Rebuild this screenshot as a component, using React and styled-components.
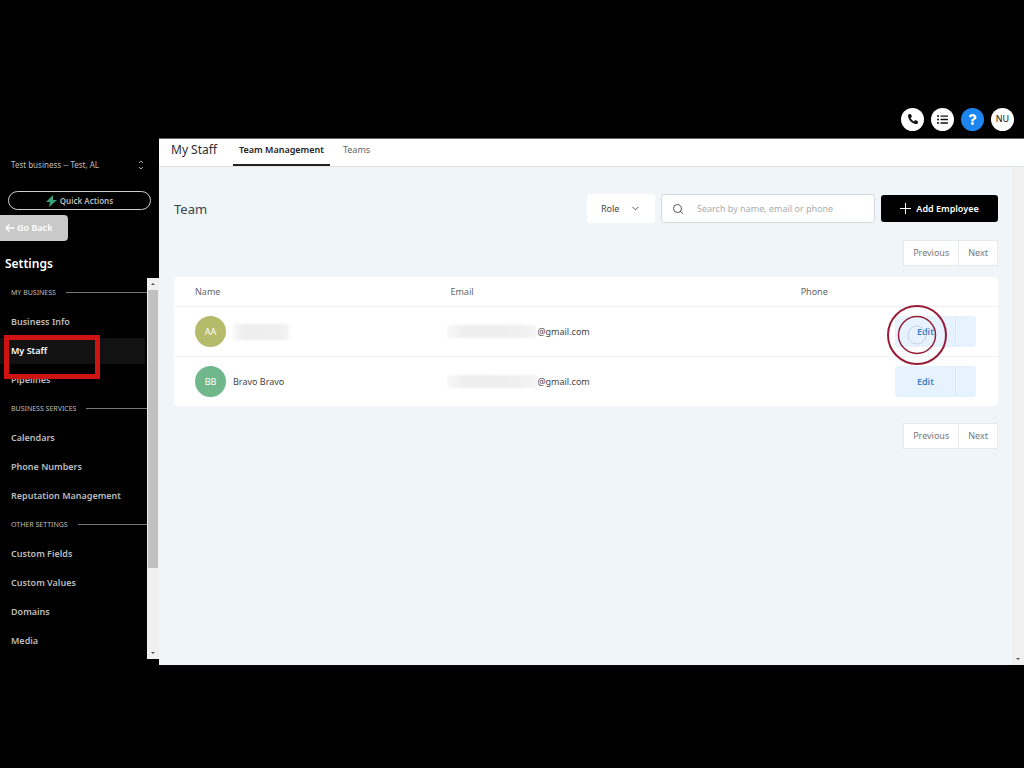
import React from "react";
import styled, { createGlobalStyle, css } from "styled-components";
import { FiSearch, FiChevronDown } from "react-icons/fi";
import { FaPhoneAlt, FaListUl, FaQuestion } from "react-icons/fa";

const GlobalStyle = createGlobalStyle`
  * {
    box-sizing: border-box;
  }
  body {
    margin: 0;
    background: #000;
    font-family: "Noto Sans", "Open Sans", sans-serif;
    font-size: 9px;
    line-height: 12px;
  }
  button,
  input,
  select {
    font: inherit;
    color: inherit;
  }
`;

const Page = styled.div`
  display: flex;
  flex-direction: column;
  min-height: 100vh;
  padding: 100px 0 103px;
  background: #000;
`;

const TopBar = styled.header`
  display: flex;
  justify-content: flex-end;
  align-items: center;
  gap: 7px;
  height: 38px;
  padding-right: 10px;
`;

const RoundButton = styled.button`
  display: flex;
  align-items: center;
  justify-content: center;
  width: 23px;
  height: 23px;
  padding: 0;
  border: 0;
  border-radius: 50%;
  background: ${({ $blue }) => ($blue ? "#1c86ee" : "#fff")};
  color: ${({ $blue }) => ($blue ? "#fff" : "#111")};
`;

const Body = styled.div`
  display: flex;
  flex: 1;
`;

const Sidebar = styled.aside`
  display: flex;
  flex-direction: column;
  width: 159px;
  flex-shrink: 0;
  padding: 18px 0 6px;
  color: #bdbdbd;
`;

const Location = styled.button`
  display: flex;
  align-items: center;
  justify-content: space-between;
  height: 18px;
  padding: 0 15px 0 11px;
  border: 0;
  background: none;
  font-size: 8px;
`;

const QuickActions = styled.button`
  display: flex;
  align-items: center;
  justify-content: center;
  gap: 3px;
  height: 19px;
  margin: 17px 8px 5px;
  padding: 0;
  border: 1px solid #d0d0d0;
  border-radius: 10px;
  background: none;
  font-size: 8px;
  font-weight: 600;
`;

const GoBack = styled.button`
  display: flex;
  align-items: center;
  align-self: flex-start;
  gap: 2px;
  width: 68px;
  height: 26px;
  padding: 0 5px;
  border: 0;
  border-radius: 0 4px 4px 0;
  background: #c9c9c9;
  color: #fff;
  font-weight: 600;
`;

const SidebarTitle = styled.h2`
  margin: 14px 0 5px 5px;
  color: #fff;
  font-size: 12px;
  font-weight: 600;
  line-height: 18px;
`;

const NavScroll = styled.div`
  display: flex;
  flex: 1;
`;

const Nav = styled.nav`
  flex: 1;
`;

const NavHeading = styled.h3`
  display: flex;
  align-items: center;
  gap: 10px;
  height: 29px;
  margin: 0;
  padding-left: 11px;
  font-size: 7px;
  font-weight: 400;
  white-space: nowrap;
  &::after {
    content: "";
    flex: 1;
    height: 1px;
    background: #777;
  }
`;

const NavLink = styled.a`
  position: relative;
  display: flex;
  align-items: center;
  height: 29px;
  padding-left: 11px;
  color: #bdbdbd;
  font-weight: 600;
  text-decoration: none;
  ${({ $active }) =>
    $active &&
    css`
      background: linear-gradient(#121212, #121212) 0 50% / 145px 26px no-repeat;
      color: #fff;
    `}
`;

const Highlight = styled.span`
  position: absolute;
  z-index: 1;
  top: -1px;
  left: 4px;
  width: 96px;
  height: 44px;
  border: 5px solid #cf1212;
`;

const ScrollTrack = styled.div`
  display: flex;
  flex-direction: column;
  align-items: center;
  width: 12px;
  flex-shrink: 0;
  background: #f0f0f0;
`;

const ScrollArrow = styled.svg`
  width: 12px;
  height: 12px;
  flex-shrink: 0;
  fill: #555;
`;

const ScrollThumb = styled.div`
  flex: 0 0 73%;
  width: 10px;
  background: #c1c1c1;
`;

const ScrollSpace = styled.div`
  flex: 1;
`;

const Main = styled.main`
  display: flex;
  flex: 1;
  flex-direction: column;
  min-width: 0;
  border-top: 1px solid #666;
  background: #eff5f8;
`;

const TabBar = styled.div`
  display: flex;
  height: 28px;
  padding-left: 12px;
  background: #fff;
  border-bottom: 1px solid #dde2e6;
`;

const PageTitle = styled.h1`
  margin: 0 16px 0 0;
  color: #2a2e34;
  font-size: 12px;
  font-weight: 400;
  line-height: 22px;
`;

const Tab = styled.a`
  padding: 5px 6px 0;
  border-bottom: 2px solid ${({ $active }) => ($active ? "#222" : "transparent")};
  margin-right: 7px;
  color: ${({ $active }) => ($active ? "#222" : "#666")};
  font-weight: ${({ $active }) => ($active ? 600 : 400)};
  text-decoration: none;
`;

const Workspace = styled.div`
  display: flex;
  flex: 1;
`;

const Content = styled.section`
  flex: 1;
  min-width: 0;
  padding: 27px 14px 0 15px;
`;

const Toolbar = styled.div`
  display: flex;
  align-items: center;
  gap: 6px;
  height: 29px;
`;

const Heading = styled.h2`
  flex: 1;
  margin: 0;
  color: #3d4248;
  font-size: 13px;
  font-weight: 400;
`;

const RoleButton = styled.button`
  display: flex;
  align-items: center;
  justify-content: space-between;
  width: 68px;
  height: 29px;
  padding: 0 14px;
  border: 0;
  border-radius: 3px;
  background: #fff;
  color: #444;
`;

const SearchBox = styled.label`
  display: flex;
  align-items: center;
  gap: 13px;
  width: 214px;
  height: 29px;
  padding: 0 10px;
  border: 1px solid #d5d9dd;
  border-radius: 3px;
  background: #fff;
  color: #555;
`;

const SearchInput = styled.input`
  flex: 1;
  min-width: 0;
  padding: 0;
  border: 0;
  outline: 0;
  background: none;
  &::placeholder {
    color: #a9adb2;
    opacity: 1;
  }
`;

const AddButton = styled.button`
  display: flex;
  align-items: center;
  justify-content: center;
  gap: 5px;
  width: 117px;
  height: 27px;
  padding: 0;
  border: 0;
  border-radius: 3px;
  background: #000;
  color: #fff;
  font-weight: 600;
`;

const Pager = styled.div`
  display: flex;
  justify-content: flex-end;
  margin: ${({ $bottom }) => ($bottom ? "17px 0 0" : "17px 0 11px")};
`;

const PagerButton = styled.button`
  height: 26px;
  padding: 0 9px;
  border: 1px solid #e6eaed;
  background: #fff;
  color: #777;
  & + & {
    border-left: 0;
  }
`;

const Table = styled.table`
  width: 100%;
  border-collapse: separate;
  border-spacing: 0;
  border-radius: 4px;
  background: #fff;
  color: #444;
  table-layout: fixed;
`;

const HeadCell = styled.th`
  width: ${({ $width }) => $width};
  height: 29px;
  padding: 0 0 0 21px;
  color: #666;
  font-weight: 400;
  text-align: left;
`;

const Cell = styled.td`
  height: 50px;
  padding: 0 0 0 21px;
  border-top: 1px solid #eef2f5;
`;

const Person = styled.div`
  display: flex;
  align-items: center;
  gap: 7px;
`;

const Avatar = styled.span`
  display: flex;
  align-items: center;
  justify-content: center;
  width: 31px;
  height: 31px;
  border-radius: 50%;
  background: ${({ $color }) => $color};
  color: #fff;
`;

const Email = styled.div`
  display: flex;
  align-items: center;
  margin-left: -3px;
`;

const Redacted = styled.span`
  width: ${({ $width }) => $width}px;
  height: ${({ $height }) => $height}px;
  background: linear-gradient(90deg, #f8f8f8, #eee 20%, #efefef 80%, #f5f5f5);
  filter: blur(1px);
`;

const Actions = styled.div`
  position: relative;
  display: flex;
`;

const EditButton = styled.button`
  width: 60px;
  height: 31px;
  padding: 0;
  border: 0;
  border-radius: 3px 0 0 3px;
  background: #e6f2fe;
  color: #3a7fc8;
  font-weight: 600;
`;

const MoreButton = styled.button`
  width: 21px;
  height: 31px;
  padding: 0;
  border: 0;
  border-left: 1px solid #dbeafa;
  border-radius: 0 3px 3px 0;
  background: #e6f2fe;
`;

const ClickRipple = styled.svg`
  position: absolute;
  top: -12px;
  left: -9px;
  width: 62px;
  height: 62px;
  fill: none;
  pointer-events: none;
`;

const sections = [
  { title: "MY BUSINESS", items: ["Business Info", "My Staff", "Pipelines"] },
  {
    title: "BUSINESS SERVICES",
    items: ["Calendars", "Phone Numbers", "Reputation Management"],
  },
  {
    title: "OTHER SETTINGS",
    items: ["Custom Fields", "Custom Values", "Domains", "Media"],
  },
];

const employees = [
  { initials: "AA", color: "#b5bb6b", name: null, clicked: true },
  { initials: "BB", color: "#70b88c", name: "Bravo Bravo", clicked: false },
];

const Pagination = ({ $bottom }) => (
  <Pager $bottom={$bottom}>
    <PagerButton>Previous</PagerButton>
    <PagerButton>Next</PagerButton>
  </Pager>
);

const SideNav = () => (
  <Sidebar>
    <Location>
      Test business -- Test, AL
      <svg width="6" height="10" viewBox="0 0 6 10" fill="none" stroke="#aaa">
        <path d="M1 3l2-2 2 2M1 7l2 2 2-2" />
      </svg>
    </Location>
    <QuickActions>
      <svg width="11" height="12" viewBox="0 0 11 12" fill="#38a47c">
        <path d="M7 0L0 7h4l-1 5 8-7H7z" />
      </svg>
      Quick Actions
    </QuickActions>
    <GoBack>
      <svg
        width="10"
        height="10"
        viewBox="0 0 10 10"
        fill="none"
        stroke="#fff"
        strokeWidth="1.5"
      >
        <path d="M9.500 5H1M4.500 1.500L1 5l3.500 3.500" />
      </svg>
      Go Back
    </GoBack>
    <SidebarTitle>Settings</SidebarTitle>
    <NavScroll>
      <Nav>
        {sections.map(({ title, items }) => (
          <React.Fragment key={title}>
            <NavHeading>{title}</NavHeading>
            {items.map((item) => (
              <NavLink key={item} href="#" $active={item === "My Staff"}>
                {item}
                {item === "My Staff" && <Highlight />}
              </NavLink>
            ))}
          </React.Fragment>
        ))}
      </Nav>
      <ScrollTrack>
        <ScrollArrow viewBox="0 0 12 12">
          <path d="M4 7l2-2 2 2z" />
        </ScrollArrow>
        <ScrollThumb />
        <ScrollSpace />
        <ScrollArrow viewBox="0 0 12 12">
          <path d="M4 5l2 2 2-2z" />
        </ScrollArrow>
      </ScrollTrack>
    </NavScroll>
  </Sidebar>
);

const App = () => (
  <Page>
    <GlobalStyle />
    <TopBar>
      <RoundButton aria-label="Phone">
        <FaPhoneAlt size={10} />
      </RoundButton>
      <RoundButton aria-label="Tasks">
        <FaListUl size={11} />
      </RoundButton>
      <RoundButton $blue aria-label="Help">
        <FaQuestion size={11} />
      </RoundButton>
      <RoundButton>NU</RoundButton>
    </TopBar>
    <Body>
      <SideNav />
      <Main>
        <TabBar>
          <PageTitle>My Staff</PageTitle>
          <Tab href="#" $active>
            Team Management
          </Tab>
          <Tab href="#">Teams</Tab>
        </TabBar>
        <Workspace>
          <Content>
            <Toolbar>
              <Heading>Team</Heading>
              <RoleButton>
                Role
                <FiChevronDown size={11} />
              </RoleButton>
              <SearchBox>
                <FiSearch size={12} />
                <SearchInput
                  aria-label="Search employees"
                  placeholder="Search by name, email or phone"
                />
              </SearchBox>
              <AddButton>
                <svg width="11" height="11" viewBox="0 0 11 11" stroke="#fff">
                  <path d="M5.500 0v11M0 5.500h11" />
                </svg>
                Add Employee
              </AddButton>
            </Toolbar>
            <Pagination />
            <Table>
              <thead>
                <tr>
                  <HeadCell $width="31%">Name</HeadCell>
                  <HeadCell $width="42.5%">Email</HeadCell>
                  <HeadCell $width="11.5%">Phone</HeadCell>
                  <HeadCell $width="15%" aria-label="Actions" />
                </tr>
              </thead>
              <tbody>
                {employees.map(({ initials, color, name, clicked }) => (
                  <tr key={initials}>
                    <Cell>
                      <Person>
                        <Avatar $color={color}>{initials}</Avatar>
                        {name || <Redacted $width={56} $height={16} />}
                      </Person>
                    </Cell>
                    <Cell>
                      <Email>
                        <Redacted $width={90} $height={13} />
                        @gmail.com
                      </Email>
                    </Cell>
                    <Cell />
                    <Cell>
                      <Actions>
                        <EditButton>Edit</EditButton>
                        <MoreButton aria-label="More actions" />
                        {clicked && (
                          <ClickRipple viewBox="0 0 62 62" stroke="#961d35">
                            <circle cx="31" cy="31" r="29" strokeWidth="2" />
                            <circle cx="31" cy="31" r="18.500" strokeWidth="1.500" />
                            <circle cx="31" cy="31" r="9" stroke="#c5cfe8" />
                          </ClickRipple>
                        )}
                      </Actions>
                    </Cell>
                  </tr>
                ))}
              </tbody>
            </Table>
            <Pagination $bottom />
          </Content>
          <ScrollTrack>
            <ScrollSpace />
            <ScrollArrow viewBox="0 0 12 12">
              <path d="M4 5l2 2 2-2z" />
            </ScrollArrow>
          </ScrollTrack>
        </Workspace>
      </Main>
    </Body>
  </Page>
);

export default App;
